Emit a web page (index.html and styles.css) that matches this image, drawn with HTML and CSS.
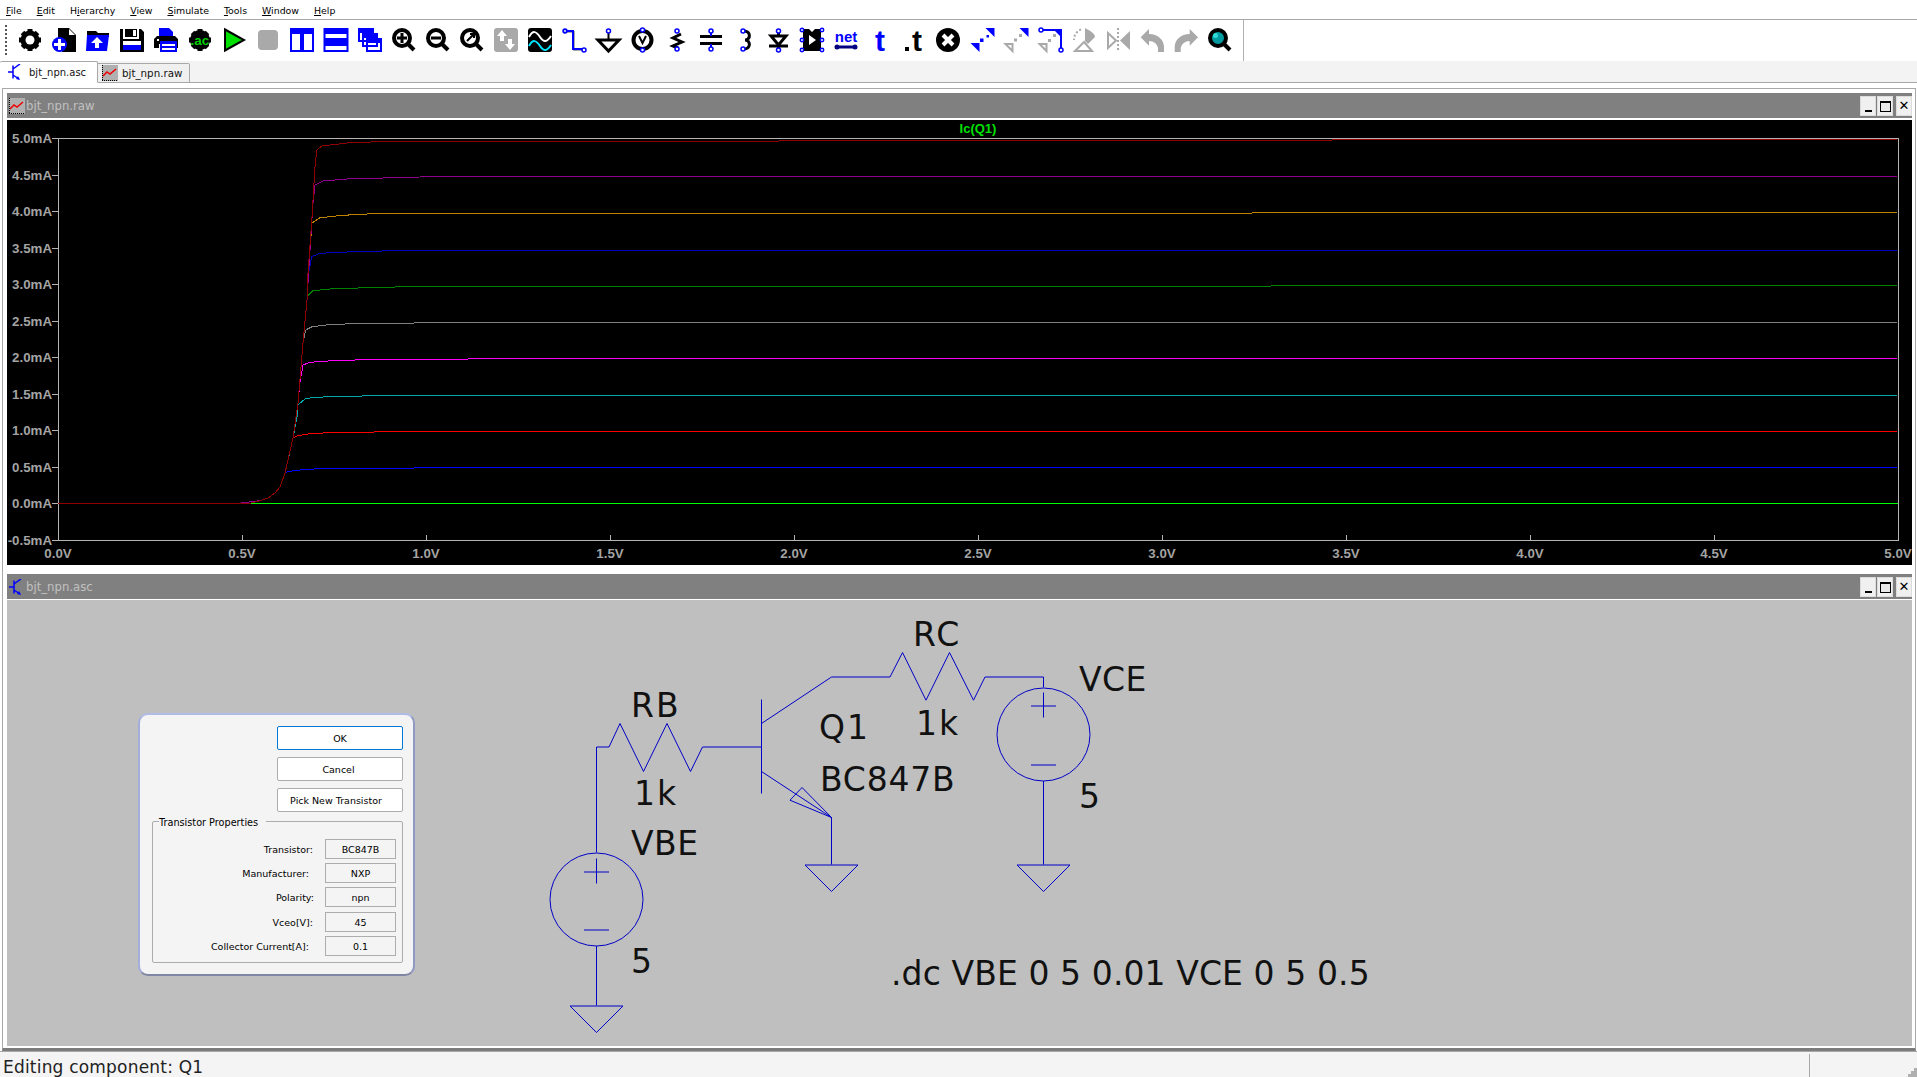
FILE: index.html
```html
<!DOCTYPE html>
<html lang="en">
<head>
<meta charset="utf-8">
<title>LTspice</title>
<link rel="stylesheet" href="styles.css">
</head>
<body>
<div class="app">
  <nav class="menubar">
    <span><u>F</u>ile</span><span><u>E</u>dit</span><span>H<u>i</u>erarchy</span><span><u>V</u>iew</span><span><u>S</u>imulate</span><span><u>T</u>ools</span><span><u>W</u>indow</span><span><u>H</u>elp</span>
  </nav>

  <div class="toolbar">
    <div class="grip"></div>
    <div class="tools">
      <svg viewBox="0 0 24 24"><path class="sk5" d="M12 1v22M1 12h22M4.5 4.5l15 15M19.500 4.500l-15 15"/><circle class="fk" cx="12" cy="12" r="9.500"/><circle class="fw" cx="12" cy="12" r="4.500"/></svg>
      <svg viewBox="0 0 24 24"><path class="fk" d="M6 0h11l7 7v17H10V12H6z"/><path class="fw" d="M17 1l6 6h-6z"/><circle class="fb" cx="7.500" cy="16.500" r="7.500"/><path class="sw3" d="M7.500 11v11M2 16.500h11"/></svg>
      <svg viewBox="0 0 24 24"><path class="fk" d="M1 3h9l2 2h11v4H1z"/><path class="fb" d="M1 7h22l-2 16H0z"/><path class="fw" d="M11 9l6 6h-4v5H9v-5H5z"/></svg>
      <svg viewBox="0 0 24 24"><path class="fk" d="M0 1h3v10h16V1h2l3 3v20H0z"/><path class="fk" d="M5 1h12v8H5z"/><path class="fw" d="M13 2h3v6h-3zM3 13h18v4H3z"/><path class="fb" d="M3 17h18v5H3z"/></svg>
      <svg viewBox="0 0 24 24"><path class="fb" d="M5 0h10l4 4v5H5z"/><path class="fk" d="M3 8h18l3 3v9h-5v-4H5v4H0v-9z"/><path class="fb" d="M6 13h17v11H6z"/><path class="fw" d="M8 16h13v2H8zM8 20h13v2H8z"/><path class="fw" d="M3 11h2v2H3z"/></svg>
      <svg viewBox="0 0 24 24"><path class="sk5" d="M12 1v22M1 12h22M4.500 4.500l15 15M19.500 4.500l-15 15"/><circle class="fk" cx="12" cy="12" r="10"/><text class="acx" x="12" y="16.500">.ac</text></svg>
      <svg viewBox="0 0 24 24"><path class="play" d="M3 1.500L22 12 3 22.500z"/></svg>
      <svg viewBox="0 0 24 24"><rect class="fg" x="2" y="2" width="20" height="20" rx="4"/></svg>
      <svg viewBox="0 0 24 24"><path class="pane" d="M1 1h10v22H1zM13 1h10v22H13z"/><path class="fb" d="M1 1h10v5H1zM13 1h10v5H13z"/></svg>
      <svg viewBox="0 0 24 24"><path class="pane" d="M0.500 1h23v10H0.500zM0.500 13h23v10H0.500z"/><path class="fb" d="M0.500 1h23v5H0.500zM0.500 13h23v5H0.500z"/></svg>
      <svg viewBox="0 0 24 24"><path class="pane" d="M1 1h14v12H1zM5 6h14v12H5zM9 11h14v12H9z"/><path class="fb" d="M1 1h14v4H1zM5 6h14v4H5zM9 11h14v4H9z"/></svg>
      <svg viewBox="0 0 24 24"><path class="sk4" d="M15 15l7 7"/><circle class="lens" cx="10" cy="10" r="8"/><path class="sk3w" d="M10 5v10M5 10h10"/></svg>
      <svg viewBox="0 0 24 24"><path class="sk4" d="M15 15l7 7"/><circle class="lens" cx="10" cy="10" r="8"/><path class="sk3w" d="M5 10h10"/></svg>
      <svg viewBox="0 0 24 24"><path class="sk4" d="M15 15l7 7"/><circle class="lens" cx="10" cy="10" r="8"/><path class="sk2" d="M7 13l7-7M10 6h4v4"/></svg>
      <svg viewBox="0 0 24 24"><rect class="fg" x="0" y="0" width="24" height="24" rx="3"/><path class="fw" d="M8 2l5 6H10v5H6V8H3zM16 22l-5-6h3v-5h4v5h3z"/></svg>
      <svg viewBox="0 0 24 24"><rect class="fk" x="0" y="0" width="24" height="24" rx="3"/><path class="wave1" d="M1 9c4-7 7-6 11 0s7 5 11-1"/><path class="wave2" d="M1 18c4-7 7-6 11 0s7 5 11-1"/></svg>
      <svg viewBox="0 0 24 24"><path class="sgs" d="M4 4h8v18h10"/><path class="sb2" d="M3 3h8v18h10"/><circle class="pin" cx="3" cy="3" r="1.800"/><circle class="pinw" cx="22" cy="22" r="2"/></svg>
      <svg viewBox="0 0 24 24"><path class="sk2" d="M12.500 4v8"/><path class="tri" d="M2 12h21l-10.500 11z"/><circle class="pinw" cx="12.500" cy="3" r="2"/></svg>
      <svg viewBox="0 0 24 24"><circle class="lens" cx="12.500" cy="12" r="9"/><path class="sk2" d="M9 8l3.500 7 3.500-7"/><circle class="pinw" cx="12.500" cy="2" r="2"/><circle class="pinw" cx="12.500" cy="22" r="2"/></svg>
      <svg viewBox="0 0 24 24"><path class="sk3" d="M17 6L9 10l9 4-9 4 5 2"/><circle class="pinw" cx="13" cy="3" r="2"/><circle class="pinw" cx="13" cy="21" r="2"/></svg>
      <svg viewBox="0 0 24 24"><path class="sk3" d="M2 8.500h22M2 15.500h22"/><path class="sb2" d="M13 5v3M13 16v3"/><circle class="pinw" cx="13" cy="3" r="2"/><circle class="pinw" cx="13" cy="21" r="2"/></svg>
      <svg viewBox="0 0 24 24"><path class="sk3" d="M12 3c7 0 7 9 1 9 6 0 6 9-1 9"/><circle class="pinw" cx="11" cy="3" r="2"/><circle class="pinw" cx="11" cy="21" r="2"/></svg>
      <svg viewBox="0 0 24 24"><path class="sk3" d="M3 18h19M12.500 4v17"/><path class="tri" d="M5 8h15l-7.500 9z"/><circle class="pinw" cx="12.500" cy="3" r="2"/><circle class="pinw" cx="12.500" cy="22" r="2"/></svg>
      <svg viewBox="0 0 24 24"><path class="fk" d="M3 1h6l3 3 3-3h6v22H3z"/><path class="fw" d="M9 7l7 5-7 5z"/><circle class="pinw" cx="2" cy="2" r="1.700"/><circle class="pinw" cx="2" cy="12" r="1.700"/><circle class="pinw" cx="2" cy="22" r="1.700"/><circle class="pinw" cx="22" cy="2" r="1.700"/><circle class="pinw" cx="22" cy="12" r="1.700"/><circle class="pinw" cx="22" cy="22" r="1.700"/></svg>
      <svg viewBox="0 0 24 24"><text class="nett" x="12" y="14">net</text><path class="sn3" d="M3 19h18"/><circle class="fn" cx="3" cy="19" r="2.500"/><circle class="fn" cx="21" cy="19" r="2.500"/></svg>
      <svg viewBox="0 0 24 24"><text class="bigt tb" x="12" y="23">t</text></svg>
      <svg viewBox="0 0 24 24"><text class="bigt" x="15" y="23">t</text><path class="fk" d="M3 19h4v4H3z"/></svg>
      <svg viewBox="0 0 24 24"><circle class="fk" cx="12" cy="12" r="12"/><path class="sw4" d="M7 7l10 10M17 7L7 17"/></svg>
      <svg viewBox="0 0 24 24"><path class="fb" d="M15.500 0h9v9zM0.500 15h9v9z"/><path class="fb" d="M10 10.500h3.500v3.500H10zM16.500 7h2.500v2.500h-2.500z"/></svg>
      <svg viewBox="0 0 24 24"><path class="fb" d="M15.500 0h9v9z"/><path class="ghost" d="M1.500 16h7v7z"/><path class="fg" d="M10 10.500h3v3h-3zM15 6h3v3h-3z"/></svg>
      <svg viewBox="0 0 24 24"><path class="sb2" d="M3 2h20v19"/><path class="fb" d="M16 2h8v8z"/><circle class="pinw" cx="3" cy="2" r="2"/><circle class="pinw" cx="23" cy="22" r="2"/><path class="ghost" d="M1.500 16h7v7z"/><path class="fg" d="M10 11h3v3h-3zM15 6h3v3h-3z"/></svg>
      <svg viewBox="0 0 24 24"><path class="fg" d="M13 0c6 3 10 6 10 9l-7 7-3-3z"/><path class="sg2d" d="M9 1.500C5 3 2 7 2 12"/><path class="ghost2" d="M12 14l8 9H3z"/></svg>
      <svg viewBox="0 0 24 24"><path class="fg" d="M24 3v19l-10-9.500z"/><path class="ghost2" d="M2 5v15l8-7.500z"/><path class="sg1d" d="M12 0v24"/></svg>
      <svg viewBox="0 0 24 24"><path class="fg" d="M0.700 9.300L9 1V6C18 6 24 12 24 19V24H18V20C17 16 14 13 9 13V17.700z"/></svg>
      <svg viewBox="0 0 24 24"><path class="fg" d="M24 9.300L15.700 1V6C6.700 6 0.700 12 0.700 19V24H6.700V20C7.700 16 10.700 13 15.700 13V17.700z"/></svg>
      <svg viewBox="0 0 24 24"><path class="sk4" d="M15 15l7 7"/><circle class="lens teal" cx="10" cy="10" r="8"/><circle class="hl" cx="7.500" cy="7.500" r="2.500"/></svg>
    </div>
    <div class="toolsep"></div>
  </div>

  <div class="tabbar">
    <div class="tab active">
      <svg class="tabicon" viewBox="0 0 16 16"><use href="#sch"/></svg>
      <span>bjt_npn.asc</span>
    </div>
    <div class="tab">
      <svg class="tabicon" viewBox="0 0 16 16"><use href="#raw"/></svg>
      <span>bjt_npn.raw</span>
    </div>
  </div>

  <main class="mdi">
    <section class="window">
      <header class="titlebar">
        <svg class="winicon" viewBox="0 0 16 16"><use href="#raw"/></svg>
        <span class="wintitle">bjt_npn.raw</span>
        <div class="winbtns">
          <div class="winbtn"><i class="ico-min"></i></div>
          <div class="winbtn"><i class="ico-max"></i></div>
          <div class="winbtn close"><i class="ico-x">✕</i></div>
        </div>
      </header>
      <div class="plot">
        <svg class="canvas" viewBox="7 120 1905 445">
          <text class="ptitle" x="978" y="133">Ic(Q1)</text>
          <path class="axis" d="M58.500 138.500H1898.500V540.500H58.500z"/>
          <path class="axis" d="M52 138.500h6M52 175.500h6M52 211.500h6M52 248.500h6M52 284.500h6M52 321.500h6M52 357.500h6M52 394.500h6M52 430.500h6M52 467.500h6M52 503.500h6M52 540.500h6M242.500 535v5M426.500 535v5M610.500 535v5M794.500 535v5M978.500 535v5M1162.500 535v5M1346.500 535v5M1530.500 535v5M1714.500 535v5"/>
          <g class="ylab">
            <text x="52" y="143">5.0mA</text><text x="52" y="180">4.5mA</text><text x="52" y="216">4.0mA</text><text x="52" y="253">3.5mA</text><text x="52" y="289">3.0mA</text><text x="52" y="326">2.5mA</text><text x="52" y="362">2.0mA</text><text x="52" y="399">1.5mA</text><text x="52" y="435">1.0mA</text><text x="52" y="472">0.5mA</text><text x="52" y="508">0.0mA</text><text x="52" y="545">-0.5mA</text>
          </g>
          <g class="xlab">
            <text x="58" y="558">0.0V</text><text x="242" y="558">0.5V</text><text x="426" y="558">1.0V</text><text x="610" y="558">1.5V</text><text x="794" y="558">2.0V</text><text x="978" y="558">2.5V</text><text x="1162" y="558">3.0V</text><text x="1346" y="558">3.5V</text><text x="1530" y="558">4.0V</text><text x="1714" y="558">4.5V</text><text x="1898" y="558">5.0V</text>
          </g>
          <path class="c c0" d="M237 503.500H1898"/>
          <path class="c c1" d="M237 503.500L251 503L260 500.700L268 498L275 493L280 487L285 473L288 471.500L300 470L318 468.700L457 467.700L1897 467"/>
          <path class="c c2" d="M237 503.500L260 500.700L268 498L275 493L280 487L285 473L293 438L298 435.700L310 433.700L329 432.700L395 431.700L1897 431"/>
          <path class="c c3" d="M237 503.500L260 500.700L268 498L275 493L280 487L285 473L293 438L297 417L298 405L305 399L314 397.300L332 396.700L376 395.700L1897 395"/>
          <path class="c c4" d="M237 503.500L260 500.700L268 498L275 493L280 487L285 473L293 438L298 403L300 382L303 365L310 362.300L332 360.700L365 359.700L513 358.700L1897 358"/>
          <path class="c c5" d="M237 503.500L260 500.700L268 498L275 493L280 487L285 473L293 438L298 403L303 343L305.700 330L312 326.700L332 324.300L358 323.700L439 322.700L1897 322"/>
          <path class="c c6" d="M237 503.500L260 500.700L268 498L275 493L280 487L285 473L293 438L298 403L303 343L307 300L308.300 295L313 290.700L333 288.700L407 286.700L1897 285.500"/>
          <path class="c c7" d="M237 503.500L260 500.700L268 498L275 493L280 487L285 473L293 438L298 403L303 343L307 300L308 276.700L311.700 256.700L320 253.300L347 252L393 250.700L1897 250"/>
          <path class="c c8" d="M237 503.500L260 500.700L268 498L275 493L280 487L285 473L293 438L298 403L303 343L307 300L310 250L312 223L320 217.700L343 215.300L373 213.700L1897 212.500"/>
          <path class="c c9" d="M237 503.500L260 500.700L268 498L275 493L280 487L285 473L293 438L298 403L303 343L307 300L310 250L313 203L315 185L323 181L347 179L420 177L1897 176"/>
          <path class="c c10" d="M58 503.500H237L251 503L260 500.700L268 498L275 493L280 487L285 473L293 438L298 403L303 343L307 300L308 273L312 217L315 167L316.700 150L322 146L353 142.300L390 141.700L1897 139"/>
        </svg>
      </div>
    </section>

    <section class="window second">
      <header class="titlebar">
        <svg class="winicon" viewBox="0 0 16 16"><use href="#sch"/></svg>
        <span class="wintitle">bjt_npn.asc</span>
        <div class="winbtns">
          <div class="winbtn"><i class="ico-min"></i></div>
          <div class="winbtn"><i class="ico-max"></i></div>
          <div class="winbtn close"><i class="ico-x">✕</i></div>
        </div>
      </header>
      <div class="schematic">
        <svg class="canvas" viewBox="7 601 1905 445">
          <g class="wires">
            <path d="M596.500 853V747.500H609L620 724L643.500 772L667 724L690.500 772L702.500 747.500H761.500"/>
            <path d="M761.500 700V794"/>
            <path d="M761.500 724L831.500 677.500H890L902.500 653L926 700.700L949.500 653L973.500 700.700L985 677.500H1043.500V688"/>
            <path d="M761.500 772L831.500 818V865"/>
            <path d="M831.500 818L790 800.700L802 788z"/>
            <circle cx="1043.500" cy="735" r="46.500"/>
            <path d="M1031 706.500h25M1043.500 693v25M1031 765.500h25"/>
            <path d="M1043.500 781.500V865"/>
            <path d="M1017 865.500h53l-26.500 26.500z"/>
            <path d="M805 865.500h53l-26.500 26.500z"/>
            <circle cx="596.500" cy="900" r="46.500"/>
            <path d="M584 872.500h25M596.500 859v25M584 930.500h25"/>
            <path d="M596.500 946.500V1006"/>
            <path d="M570 1006.500h53l-26.500 26.500z"/>
          </g>
          <g class="labels">
            <text class="wide" x="631" y="717">RB</text>
            <text class="wide" x="913" y="646">RC</text>
            <text class="mid" x="1079" y="691">VCE</text>
            <text class="wide" x="819" y="739">Q1</text>
            <text class="wide" x="916" y="735">1k</text>
            <text class="mid2" x="820" y="791">BC847B</text>
            <text x="1079" y="808">5</text>
            <text class="wide" x="634" y="805">1k</text>
            <text class="mid" x="631" y="855">VBE</text>
            <text x="631" y="973">5</text>
            <text class="dc" x="891" y="985">.dc VBE 0 5 0.01 VCE 0 5 0.5</text>
          </g>
        </svg>

        <div class="dialog">
          <div class="btncol">
            <button class="btn default">OK</button>
            <button class="btn cancel">Cancel</button>
            <button class="btn pick">Pick New Transistor</button>
          </div>
          <div class="group">
            <span class="legend">Transistor Properties</span>
            <div class="prop p1"><label>Transistor:</label><output>BC847B</output></div>
            <div class="prop p2"><label>Manufacturer:</label><output>NXP</output></div>
            <div class="prop p3"><label>Polarity:</label><output>npn</output></div>
            <div class="prop p4"><label>Vceo[V]:</label><output>45</output></div>
            <div class="prop p5"><label>Collector Current[A]:</label><output>0.1</output></div>
          </div>
        </div>
      </div>
    </section>
  </main>

  <footer class="statusbar">
    <div class="status-main">Editing component: Q1</div>
    <div class="status-side"><svg class="sizegrip" viewBox="0 0 9 9"><path d="M6 0h3v3H6zM3 3h3v3H3zM6 3h3v3H6zM0 6h3v3H0zM3 6h3v3H3zM6 6h3v3H6z"/></svg></div>
  </footer>
</div>

<svg class="defs" aria-hidden="true">
  <symbol id="sch" viewBox="0 0 16 16">
    <path class="symb" d="M5 1.500v13M0 8h5M5 5l7-5M5 11l6 4"/>
    <path class="symf" d="M12 16l-4-1 2-3z"/>
  </symbol>
  <symbol id="raw" viewBox="0 0 16 16">
    <rect class="symbg" width="16" height="16"/>
    <path class="symr" d="M1 11l4-4 3 2 6-5"/>
    <path class="symk" d="M0.500 0v16M0 15.500h16" />
  </symbol>
</svg>
</body>
</html>
```
FILE: styles.css
```css
* { box-sizing: border-box; }
html, body { margin: 0; padding: 0; height: 100%; overflow: hidden; }
body { font-family: "DejaVu Sans", sans-serif; font-size: 9.5px; color: #000; background: #f4f4f4; }
.app { width: 1917px; height: 1077px; display: flex; flex-direction: column; overflow: hidden; }

/* menu */
.menubar { height: 20px; background: #fff; border-bottom: 1px solid #a8a8a8; display: flex; align-items: center; gap: 15px; padding: 2px 0 0 6px; font-size: 9.400px; }

/* toolbar */
.toolbar { height: 41px; background: #fff; display: flex; align-items: center; padding-bottom: 1px; }
.grip { width: 2px; height: 30px; margin: 0 6px 0 5px; border-left: 2px dotted #555; }
.tools { display: flex; width: 1224px; }
.tools svg { width: 24px; height: 24px; margin: 0 5px; flex: none; overflow: visible; }
.toolsep { width: 1px; height: 41px; margin-left: 6px; background: #b0b0b0; }

/* icon paints */
.fk { fill: #000; } .fw { fill: #fff; } .fb { fill: #0000ff; } .fg { fill: #a9a9a9; } .fn { fill: #000080; }
.sk2, .sk3, .sk4, .sk5, .sb2, .sgs, .sw3, .sw4, .sn3, .sk3w, .wave1, .wave2, .sg2d, .sg1d { fill: none; }
.sk2 { stroke: #000; stroke-width: 2; } .sk3 { stroke: #000; stroke-width: 3; } .sk4 { stroke: #000; stroke-width: 4; } .sk5 { stroke: #000; stroke-width: 5; }
.sb2 { stroke: #0000ff; stroke-width: 2; }
.sgs { stroke: #a9a9a9; stroke-width: 2; }
.sw3 { stroke: #fff; stroke-width: 3; } .sw4 { stroke: #fff; stroke-width: 4; }
.sn3 { stroke: #000080; stroke-width: 3; }
.sk3w { stroke: #000; stroke-width: 3; }
.tri { fill: #fff; stroke: #000; stroke-width: 3; }
.pane { stroke: #0000ff; stroke-width: 2; fill: #fff; }
.lens { stroke: #000; stroke-width: 4; fill: #fff; }
.lens.teal { fill: #009aa0; }
.hl { fill: #30d8d8; }
.wave1 { stroke: #fff; stroke-width: 2; } .wave2 { stroke: #00e5ff; stroke-width: 2; }
.pin { fill: #fff; stroke: #0000ff; stroke-width: 1.800; }
.pinw { fill: #fff; stroke: #0000ff; stroke-width: 1.500; }
.play { fill: #00e000; stroke: #000; stroke-width: 2; }
.ghost { stroke: #a9a9a9; stroke-width: 2; fill: #fff; }
.ghost2 { stroke: #a9a9a9; stroke-width: 2; fill: #fff; }
.sg2d { stroke: #a9a9a9; stroke-width: 2; stroke-dasharray: 2 2; }
.sg1d { stroke: #a9a9a9; stroke-width: 2; stroke-dasharray: 2 2; }
.acx { fill: #00d000; font: bold 13.500px "Liberation Sans", sans-serif; text-anchor: middle; }
.nett { fill: #0000ff; font: bold 15px "Liberation Sans", sans-serif; text-anchor: middle; }
.bigt { fill: #000; font: bold 30px "Liberation Sans", sans-serif; text-anchor: middle; }
.bigt.tb { fill: #0000ff; }

/* tabs */
.tabbar { height: 22px; background: #f3f3f3; border-bottom: 1px solid #a8a8a8; display: flex; align-items: flex-end; }
.tab { width: 92px; height: 20px; margin-bottom: -1px; background: #f0f0f0; border: 1px solid #a8a8a8; border-left: 0; border-radius: 0 2px 0 0; display: flex; align-items: center; gap: 4px; padding: 0 0 0 4px; font-size: 10.300px; color: #111; }
.tab.active { width: 98px; height: 22px; background: #fff; border-bottom-color: #fff; border-radius: 2px 2px 0 0; padding-left: 8px; gap: 5px; font-size: 10px; }
.tabicon { width: 16px; height: 16px; flex: none; }

/* MDI */
.mdi { flex: 1; min-height: 0; display: flex; flex-direction: column; background: #fff; padding-top: 5px; }
.window { height: 482px; border: 1px solid #a8a8a8; border-bottom: 0; margin: 0 1px 0 2px; padding: 4px 3px 5px 4px; background: #fff; display: flex; flex-direction: column; }
.window.second { height: 481px; border-top: 0; border-bottom: 3px solid #7c7c7c; padding: 4px 3px 2px 4px; }
.titlebar { height: 25px; flex: none; background: #808080; display: flex; align-items: center; margin-bottom: 2px; padding-left: 2px; color: #c0c0c0; font-size: 11.700px; }
.second .titlebar { margin-bottom: 1px; }
.winicon { width: 16px; height: 16px; flex: none; margin-right: 1px; }
.wintitle { flex: 1; }
.winbtns { display: flex; gap: 1px; }
.winbtn { width: 16px; height: 20px; background: #f0f0f0; border: 1px solid #dcdcdc; display: flex; align-items: flex-end; justify-content: center; }
.winbtn.close { margin-left: 2px; }
.ico-min { width: 7px; height: 2px; background: #000; margin-bottom: 3px; }
.ico-max { width: 11px; height: 11px; border: 1px solid #000; border-top-width: 2px; margin-bottom: 3px; background: #e8e8e8; }
.ico-x { font-style: normal; font-size: 13px; line-height: 18px; color: #000; font-weight: bold; }

.plot { flex: 1; min-height: 0; background: #000; }
.schematic { flex: 1; min-height: 0; background: #bfbfbf; position: relative; }
.canvas { display: block; width: 100%; height: 100%; }

/* plot */
.axis { fill: none; stroke: #b4b4b4; stroke-width: 1; shape-rendering: crispEdges; }
.ptitle { fill: #00e000; font: bold 13px "Liberation Sans", sans-serif; text-anchor: middle; }
.ylab text { fill: #a4a4a4; font: bold 13.300px "Liberation Sans", sans-serif; text-anchor: end; }
.xlab text { fill: #a4a4a4; font: bold 13.300px "Liberation Sans", sans-serif; text-anchor: middle; }
.c { fill: none; stroke-width: 1; shape-rendering: crispEdges; }
.c0 { stroke: #00ff00; } .c1 { stroke: #0000ff; } .c2 { stroke: #ff0000; } .c3 { stroke: #00a8a8; }
.c4 { stroke: #ff00ff; } .c5 { stroke: #808080; } .c6 { stroke: #008000; } .c7 { stroke: #0000c0; }
.c8 { stroke: #c08000; } .c9 { stroke: #900090; } .c10 { stroke: #900000; }

/* schematic */
.wires path, .wires circle { fill: none; stroke: #0000c8; stroke-width: 1; }
.labels text { fill: #111; font-family: "DejaVu Sans", sans-serif; font-size: 33px; }
.labels .wide { letter-spacing: 2px; }
.labels .mid { letter-spacing: 0.500px; }
.labels .mid2 { letter-spacing: 0.800px; }
.labels .dc { letter-spacing: 0.100px; }

/* dialog */
.dialog { position: absolute; left: 131px; top: 113px; width: 277px; height: 263px; background: #f4f4f4; border: 2px solid; border-color: #b0bce8 #9098c4 #8087a4 #a4aedc; border-radius: 10px; padding: 11px 10px 11px 12px; display: flex; flex-direction: column; }
.btncol { display: flex; flex-direction: column; align-items: flex-end; gap: 7px; }
.btn { width: 126px; height: 24px; background: #fff; border: 1px solid #adadad; border-radius: 2px; padding: 0; font: 9.500px "DejaVu Sans", sans-serif; color: #000; }
.btn.default { border-color: #0078d7; }
.btn.cancel { padding-right: 3px; }
.btn.pick { padding-right: 8px; }
.group { position: relative; height: 142px; margin-top: 9px; border: 1px solid #adadad; border-radius: 2px; padding: 17px 6px 0 0; display: flex; flex-direction: column; }
.legend { position: absolute; left: 6px; top: -5px; background: #f4f4f4; padding-right: 8px; line-height: 12px; font-size: 9.700px; }
.prop { height: 20px; margin-bottom: 4px; display: flex; justify-content: flex-end; align-items: center; }
.prop.p4 { margin-top: 1px; }
.prop output { width: 71px; height: 20px; border: 1px solid #adadad; background: #f4f4f4; display: flex; align-items: center; justify-content: center; }
.p1 label, .p4 label { margin-right: 12px; } .p2 label, .p5 label { margin-right: 16px; } .p3 label { margin-right: 11px; }

/* status */
.statusbar { height: 26px; flex: none; background: #f4f4f4; border-top: 1px solid #a8a8a8; display: flex; font-size: 17px; color: #222; }
.status-main { flex: 1; padding: 3px 0 0 3px; line-height: 24px; letter-spacing: 0.200px; }
.status-side { width: 108px; border-left: 1px solid #a8a8a8; margin-top: 2px; position: relative; }
.sizegrip { position: absolute; right: 0; bottom: 0; width: 9px; height: 9px; fill: #b0b0b0; }

/* shared symbols */
.defs { position: absolute; width: 0; height: 0; }
.symb { fill: none; stroke: #0000ff; stroke-width: 1.500; }
.symf { fill: #0000ff; }
.symbg { fill: #b0b0b0; }
.symr { fill: none; stroke: #f00000; stroke-width: 1.500; }
.symk { fill: none; stroke: #000; stroke-width: 1; stroke-dasharray: 1 1; }
```
